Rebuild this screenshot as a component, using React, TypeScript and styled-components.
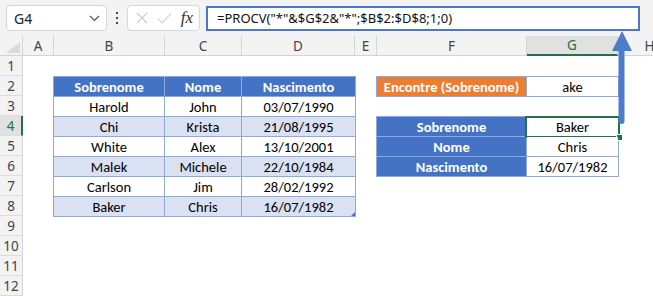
import styled, { createGlobalStyle } from 'styled-components';

const GlobalStyle = createGlobalStyle`
  body {
    margin: 0;
    background: #ffffff;
    overflow: hidden;
  }
`;

const uiFont = `'Noto Sans', 'Open Sans', sans-serif`;
const cellFont = `Carlito, Lato, 'Liberation Sans', sans-serif`;

const colWidths = [23, 31, 111, 77, 113, 22, 150, 91, 64];
const colNames = ['A', 'B', 'C', 'D', 'E', 'F', 'G', 'H'];

const people = [
  ['Harold', 'John', '03/07/1990'],
  ['Chi', 'Krista', '21/08/1995'],
  ['White', 'Alex', '13/10/2001'],
  ['Malek', 'Michele', '22/10/1984'],
  ['Carlson', 'Jim', '28/02/1992'],
  ['Baker', 'Chris', '16/07/1982'],
];

function Page({ children }: { children: React.ReactNode }) {
  return <StyledPage>{children}</StyledPage>;
}

function FormulaBar() {
  return (
    <Toolbar>
      <NameBox>
        <span>G4</span>
        <svg width="11" height="7" viewBox="0 0 11 7">
          <path d="M1 1 L5.5 5.5 L10 1" fill="none" stroke="#555" strokeWidth="1.2" />
        </svg>
      </NameBox>
      <Dots>
        <i />
        <i />
        <i />
      </Dots>
      <FxBox>
        <svg width="14" height="14" viewBox="0 0 14 14">
          <path d="M1 1 L13 13 M13 1 L1 13" stroke="#c4c4c4" strokeWidth="1.2" />
        </svg>
        <svg width="17" height="13" viewBox="0 0 17 13">
          <path d="M1 6.5 L6 11.5 L16 1" fill="none" stroke="#c4c4c4" strokeWidth="1.2" />
        </svg>
        <Fx>fx</Fx>
      </FxBox>
      <FormulaInput>=PROCV("*"&amp;$G$2&amp;"*";$B$2:$D$8;1;0)</FormulaInput>
    </Toolbar>
  );
}

function App() {
  return (
    <Page>
      <GlobalStyle />
      <FormulaBar />
      <Sheet>
        <Corner />
        {colNames.map((name, i) => (
          <ColHeader key={name} $col={i + 2} $active={name === 'G'}>
            {name}
          </ColHeader>
        ))}
        {Array.from({ length: 12 }, (_, i) => (
          <RowHeader key={i} $row={i + 2} $active={i + 1 === 4}>
            {i + 1}
          </RowHeader>
        ))}

        <DataTable $cols="110px 76px 1fr" $from={3} $to={6} $rowFrom={3} $rowTo={10}>
          <Head>Sobrenome</Head>
          <Head>Nome</Head>
          <Head>Nascimento</Head>
          {people.map((p, r) =>
            p.map((v, c) => (
              <Cell key={`${r}-${c}`} $band={r % 2 === 1}>
                {v}
              </Cell>
            ))
          )}
          <ResizeMark />
        </DataTable>

        <DataTable $cols="149px 1fr" $from={7} $to={9} $rowFrom={3} $rowTo={4}>
          <Head $orange>Encontre (Sobrenome)</Head>
          <Cell>ake</Cell>
        </DataTable>

        <DataTable $cols="149px 1fr" $from={7} $to={9} $rowFrom={5} $rowTo={8}>
          <Head>Sobrenome</Head>
          <Cell>
            Baker
            <Selection>
              <Handle />
            </Selection>
          </Cell>
          <Head>Nome</Head>
          <Cell>Chris</Cell>
          <Head>Nascimento</Head>
          <Cell>16/07/1982</Cell>
        </DataTable>
      </Sheet>

      <Arrow width="30" height="100" viewBox="0 0 30 100">
        <path d="M10 20 L1 20 L11 0 L21 20 L13 20 Z" fill="#4d7ccf" />
        <rect x="7.5" y="18" width="6" height="75" rx="3" fill="#4d7ccf" />
      </Arrow>
    </Page>
  );
}

const StyledPage = styled.div`
  position: relative;
  width: 653px;
  height: 296px;
  overflow: hidden;
  background: #ffffff;
`;

const Toolbar = styled.div`
  display: flex;
  align-items: center;
  height: 36px;
  padding: 0 12px 0 6px;
  box-sizing: border-box;
  background: #f3f3f3;
  font-family: ${uiFont};
`;

const NameBox = styled.div`
  display: flex;
  align-items: center;
  justify-content: space-between;
  width: 101px;
  height: 26px;
  padding: 0 6px 0 7px;
  box-sizing: border-box;
  background: #ffffff;
  border: 1px solid #d6d6d6;
  border-radius: 4px;
  font-size: 14px;
  color: #222;
`;

const Dots = styled.div`
  display: flex;
  flex-direction: column;
  gap: 3px;
  margin: 0 9px 0 9px;

  i {
    width: 2px;
    height: 2px;
    background: #444;
  }
`;

const FxBox = styled.div`
  display: flex;
  align-items: center;
  gap: 9px;
  width: 73px;
  height: 26px;
  padding: 0 6px 0 8px;
  box-sizing: border-box;
  background: #ffffff;
  border: 1px solid #d6d6d6;
  border-radius: 4px;
`;

const Fx = styled.span`
  margin-left: auto;
  font-family: 'Liberation Serif', serif;
  font-style: italic;
  font-size: 17px;
  color: #333;
`;

const FormulaInput = styled.div`
  display: flex;
  align-items: center;
  width: 434px;
  height: 25px;
  margin-left: 6px;
  padding-left: 9px;
  box-sizing: border-box;
  background: #ffffff;
  border: 2px solid #4a77c8;
  font-size: 13px;
  color: #111;
  white-space: nowrap;
`;

const Sheet = styled.div`
  display: grid;
  grid-template-columns: ${colWidths.map((w) => `${w}px`).join(' ')};
  grid-template-rows: repeat(13, 20px);
  font-family: ${cellFont};
`;

const Corner = styled.div`
  grid-column: 1;
  grid-row: 1;
  position: relative;
  background: #f3f3f3;
  border-right: 1px solid #d4d4d4;
  border-bottom: 1px solid #d4d4d4;

  &::after {
    content: '';
    position: absolute;
    right: 2px;
    bottom: 2px;
    border-style: solid;
    border-width: 0 0 11px 14px;
    border-color: transparent transparent #dadada transparent;
  }
`;

const ColHeader = styled.div<{ $col: number; $active: boolean }>`
  grid-column: ${(p) => p.$col};
  grid-row: 1;
  display: flex;
  align-items: center;
  justify-content: center;
  background: ${(p) => (p.$active ? '#e1e1e1' : '#f3f3f3')};
  border-right: 1px solid #d4d4d4;
  border-bottom: ${(p) => (p.$active ? '2px solid #217346' : '1px solid #d4d4d4')};
  font-family: ${uiFont};
  font-size: 13.5px;
  color: ${(p) => (p.$active ? '#217346' : '#444')};
`;

const RowHeader = styled.div<{ $row: number; $active: boolean }>`
  grid-column: 1;
  grid-row: ${(p) => p.$row};
  display: flex;
  align-items: center;
  justify-content: center;
  background: ${(p) => (p.$active ? '#e1e1e1' : '#f3f3f3')};
  border-right: ${(p) => (p.$active ? '2px solid #217346' : '1px solid #d4d4d4')};
  border-bottom: 1px solid #dcdcdc;
  font-family: ${uiFont};
  font-size: 13.5px;
  color: ${(p) => (p.$active ? '#217346' : '#444')};
`;

const DataTable = styled.div<{
  $cols: string;
  $from: number;
  $to: number;
  $rowFrom: number;
  $rowTo: number;
}>`
  grid-column: ${(p) => p.$from} / ${(p) => p.$to};
  grid-row: ${(p) => p.$rowFrom} / ${(p) => p.$rowTo};
  position: relative;
  display: grid;
  grid-template-columns: ${(p) => p.$cols};
  grid-auto-rows: 1fr;
  gap: 1px;
  padding: 1px;
  margin: 0 -1px -1px -1px;
  background: #8eaadb;
`;

const Head = styled.div<{ $orange?: boolean }>`
  display: flex;
  align-items: center;
  justify-content: center;
  background: ${(p) => (p.$orange ? '#ed7d31' : '#4472c4')};
  color: #ffffff;
  font-weight: 700;
  font-size: 14.5px;
  white-space: nowrap;
`;

const Cell = styled.div<{ $band?: boolean }>`
  position: relative;
  display: flex;
  align-items: center;
  justify-content: center;
  background: ${(p) => (p.$band ? '#d9e1f2' : '#ffffff')};
  color: #000;
  font-size: 14.5px;
  white-space: nowrap;
`;

const ResizeMark = styled.div`
  position: absolute;
  right: 1px;
  bottom: 1px;
  border-style: solid;
  border-width: 0 0 4px 4px;
  border-color: transparent transparent #4472c4 transparent;
`;

const Selection = styled.div`
  position: absolute;
  inset: -1px -2px -2px -2px;
  border: 2px solid #217346;
`;

const Handle = styled.div`
  position: absolute;
  right: -5px;
  bottom: -5px;
  width: 5px;
  height: 5px;
  background: #217346;
  border: 1px solid #ffffff;
`;

const Arrow = styled.svg`
  position: absolute;
  left: 611px;
  top: 31px;
`;

export default App;
